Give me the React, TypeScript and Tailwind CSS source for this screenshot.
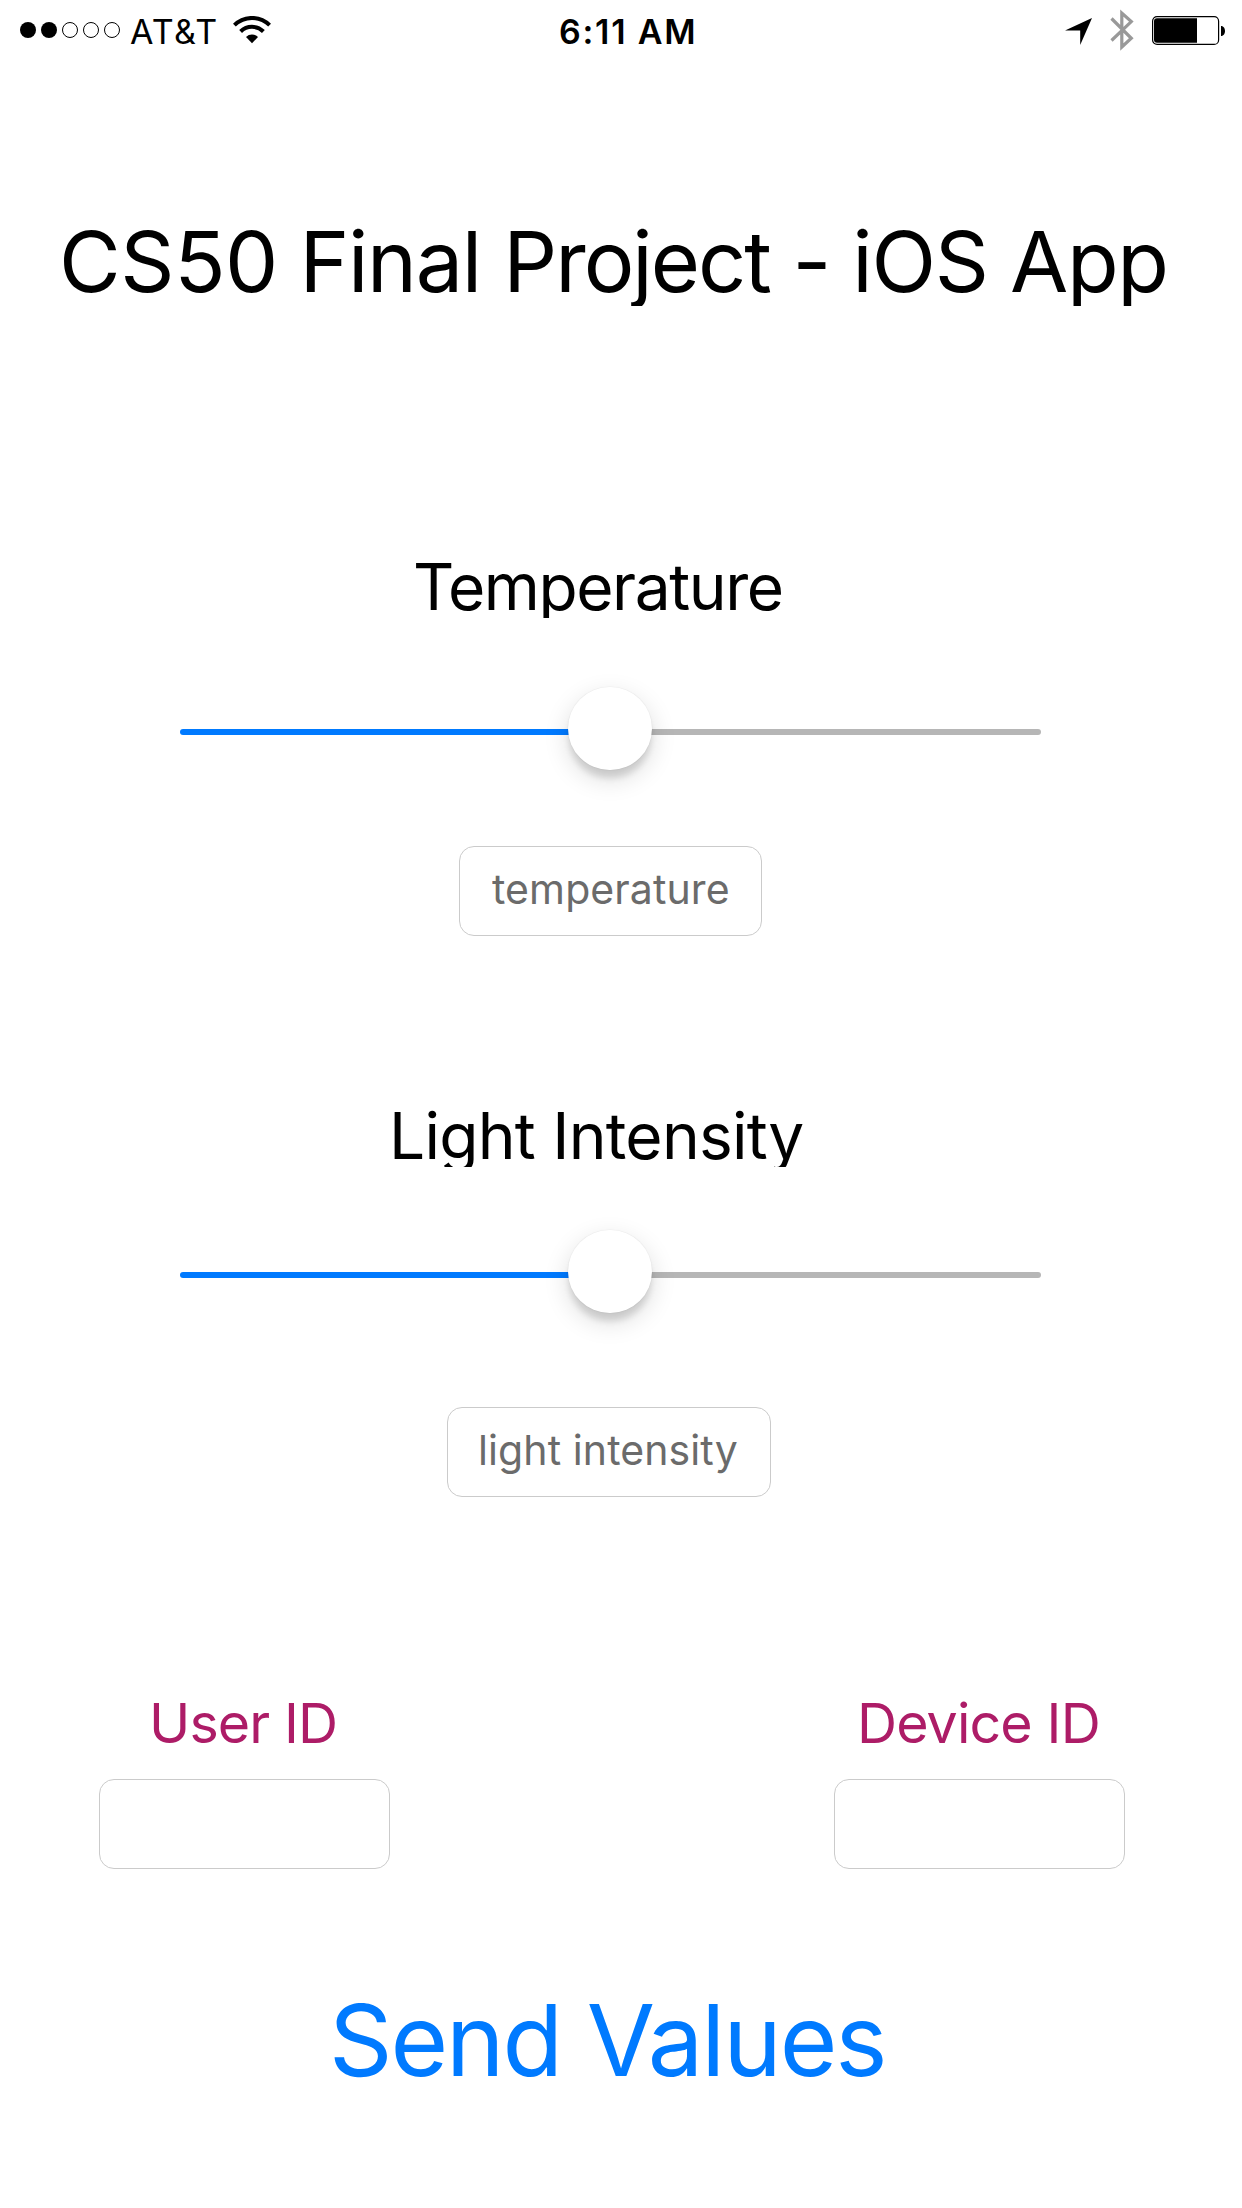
function Wifi() {
  return (
    <svg className="ml-[17px] h-7 w-[38px]" viewBox="0 0 38 28" fill="none" stroke="#000">
      <path d="M1.4 9.2a25 25 0 0 1 35.2 0" strokeWidth="4" />
      <path d="M7.6 15.5a16.2 16.2 0 0 1 22.8 0" strokeWidth="4" />
      <path d="M19 27.2l-6-6.2a8.6 8.6 0 0 1 12 0z" fill="#000" stroke="none" />
    </svg>
  );
}

function StatusBar() {
  return (
    <header className="grid h-[60px] grid-cols-[559px_1fr_auto] items-center">
      <div className="flex items-center pl-5">
        <div className="flex gap-[5px]">
          <i className="size-4 rounded-full bg-black" />
          <i className="size-4 rounded-full bg-black" />
          <i className="size-4 rounded-full border border-black" />
          <i className="size-4 rounded-full border border-black" />
          <i className="size-4 rounded-full border border-black" />
        </div>
        <span className="-mb-[2px] ml-[10px] mt-[2px] w-[86px] whitespace-nowrap text-[34px] leading-[60px] tracking-[1.3px]">
          AT&amp;T
        </span>
        <Wifi />
      </div>
      <span className="-mb-[2px] mt-[2px] whitespace-nowrap text-[34px] font-semibold leading-[60px] tracking-[1.75px]">
        6:11 AM
      </span>
      <div className="flex items-center pr-4">
        <svg className="mr-[18px] mt-[2px] h-[27px] w-[27px]" viewBox="0 0 27 27">
          <path d="M27 0L15.2 27V12.6H0z" fill="#000" />
        </svg>
        <svg className="mr-[18px] h-[42px] w-6" viewBox="0 0 24 42" fill="none" stroke="#999" strokeWidth="3.2">
          <path d="M1.5 9.5L21.3 29.3 11.8 38V4l9.5 8.6L1.5 31.5" />
        </svg>
        <svg className="h-[29px] w-[74px]" viewBox="0 0 74 29">
          <rect x="0.6" y="0.6" width="66" height="27.8" rx="4.5" fill="none" stroke="#000" strokeWidth="1.2" />
          <path d="M5 2.2h40v24.6H5a3 3 0 0 1-3-3V5.2a3 3 0 0 1 3-3z" />
          <path d="M69 10c5.3 0 5.3 10 0 10z" />
        </svg>
      </div>
    </header>
  );
}

function Slider({ className }: { className: string }) {
  return (
    <div className={`relative ml-[180px] h-[84px] w-[861px] pt-[42px] ${className}`}>
      <div className="flex h-[6px] overflow-hidden rounded-full">
        <div className="w-1/2 bg-[#007aff]" />
        <div className="w-1/2 bg-[#b6b6b6]" />
      </div>
      <div className="absolute left-[388px] top-0 h-[83px] w-[84px] rounded-full bg-white shadow-[0_0_1px_0.5px_rgba(0,0,0,0.05),0_9px_6px_-1px_rgba(0,0,0,0.12),0_9px_26px_rgba(0,0,0,0.14)]" />
    </div>
  );
}

const field =
  "block h-[90px] rounded-[15px] border border-[#cbcbcb] bg-white pb-[4px] text-[41px] tracking-[0.1px] outline-none placeholder:text-[#6b6b6b] placeholder:opacity-100";

export default function App() {
  return (
    <main className="flex h-[2208px] w-[1242px] flex-col overflow-hidden bg-white font-['Inter',sans-serif] text-black">
      <StatusBar />
      <h1 className="ml-[59px] mt-[157px] h-[89px] overflow-hidden whitespace-nowrap text-[84.5px] leading-[89px] tracking-[-1.35px]">
        <span className="tracking-[-0.4px]">CS50</span>
        <span className="-ml-px"> Final </span>
        <span className="tracking-[-2px]">Project</span> - iOS App
      </h1>

      <h2 className="ml-[413px] mt-[250px] h-[62px] overflow-hidden whitespace-nowrap text-[64px] leading-[62px] tracking-[-1.42px]">
        Temperature
      </h2>
      <Slider className="mt-[69px]" />
      <input className={`${field} ml-[459px] mt-[75px] w-[303px] pl-8`} placeholder="temperature" />

      <h2 className="ml-[389px] mt-[169px] h-[62px] overflow-hidden whitespace-nowrap text-[64px] leading-[62px] tracking-[-0.74px]">
        Light Intensity
      </h2>
      <Slider className="mt-[63px]" />
      <input className={`${field} ml-[447px] mt-[93px] w-[324px] pl-[30px]`} placeholder="light intensity" />

      <div className="mt-[194px] flex justify-between pl-[99px] pr-[117px]">
        <label className="w-[291px]">
          <span className="block h-16 pl-[50px] text-[55.5px] leading-[64px] tracking-[-0.9px] text-[#ad1c67]">
            User ID
          </span>
          <input className={`${field} mt-6 w-full px-6`} />
        </label>
        <label className="w-[291px]">
          <span className="block h-16 whitespace-nowrap pl-[23px] text-[55.5px] leading-[64px] tracking-[-0.86px] text-[#ad1c67]">
            Device ID
          </span>
          <input className={`${field} mt-6 w-full px-6`} />
        </label>
      </div>

      <button className="ml-[329px] mt-[111px] h-[120px] self-start whitespace-nowrap text-[99px] leading-[120px] tracking-[-2.1px] text-[#007aff]">
        Send Values
      </button>
    </main>
  );
}
